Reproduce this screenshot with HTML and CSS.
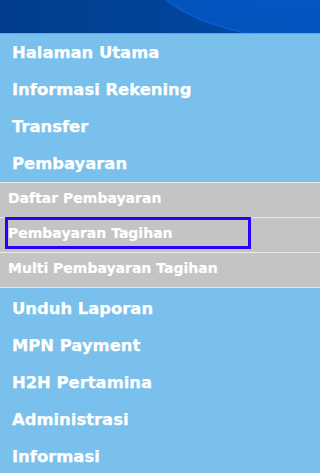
FILE: index.html
```html
<!DOCTYPE html>
<html>
<head>
<meta charset="utf-8">
<link rel="stylesheet" href="styles.css">
</head>
<body>
<div class="sidebar">
  <div class="header"></div>
  <ul class="menu">
    <li class="item"><a href="#">Halaman Utama</a></li>
    <li class="item"><a href="#">Informasi Rekening</a></li>
    <li class="item"><a href="#">Transfer</a></li>
    <li class="item"><a href="#">Pembayaran</a></li>
    <li class="sub">
      <ul class="submenu">
        <li class="subitem"><a href="#">Daftar Pembayaran</a></li>
        <li class="subitem"><a href="#" class="active">Pembayaran Tagihan</a></li>
        <li class="subitem"><a href="#">Multi Pembayaran Tagihan</a></li>
      </ul>
    </li>
    <li class="item after"><a href="#">Unduh Laporan</a></li>
    <li class="item"><a href="#">MPN Payment</a></li>
    <li class="item"><a href="#">H2H Pertamina</a></li>
    <li class="item"><a href="#">Administrasi</a></li>
    <li class="item"><a href="#">Informasi</a></li>
  </ul>
</div>
</body>
</html>
```
FILE: styles.css
```css
html, body {
  margin: 0;
  padding: 0;
  background: #79c1ec;
}
.sidebar {
  height: 473px;
  overflow: hidden;
  background: #79c1ec;
  font-family: "DejaVu Sans", Verdana, sans-serif;
  font-weight: bold;
}
.header {
  height: 33px;
  border-bottom: 1px solid #5ea8de;
  background:
    radial-gradient(ellipse 168px 80px at 310px -40px, #0659c8 0%, #0353bd 97%, #0a5fcf 99%, rgba(0,70,160,0) 100%),
    linear-gradient(90deg, #003d8c 0%, #00449a 50%, #004aa6 100%);
}
.menu, .submenu {
  list-style: none;
  margin: 0;
  padding: 0;
}
.item {
  height: 37px;
  line-height: 37px;
  padding-left: 12px;
  font-size: 16.4px;
}
.item a {
  color: #ffffff;
  text-decoration: none;
  -webkit-text-stroke: 0.25px #ffffff;
}
.subitem {
  height: 34px;
  border-top: 1px solid #e8e8e8;
  background: #c4c4c4;
  padding-left: 8px;
  font-size: 14px;
}
.subitem:last-child {
  border-bottom: 1px solid #e8e8e8;
}
.subitem a {
  display: block;
  width: 240px;
  height: 26px;
  margin-top: 2px;
  line-height: 26px;
  color: #ffffff;
  text-decoration: none;
  -webkit-text-stroke: 0.2px #ffffff;
}
.subitem a.active {
  outline: 3px solid #2a00ff;
}
.after {
  margin-top: 2px;
}
```
